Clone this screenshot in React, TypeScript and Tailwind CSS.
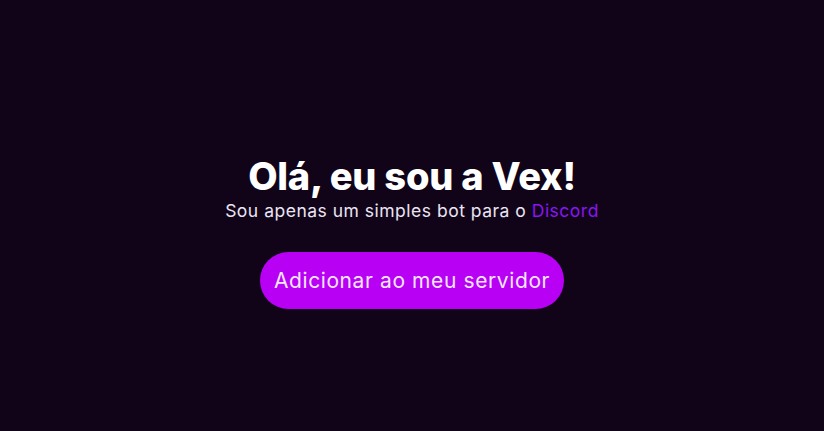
const App = () => {
  return (
    <main className="flex h-[431px] w-full flex-col items-center bg-[#110419] pt-[152px] font-['Inter',sans-serif]">
      <h1 className="text-[38px] font-extrabold leading-[48px] tracking-[-0.2px] text-white">
        Olá, eu sou a Vex!
      </h1>
      <p className="text-[17.5px] leading-[22px] tracking-[0.5px] text-[#ece4f4]">
        Sou apenas um simples bot para o{' '}
        <span className="text-[#8b14f5]">Discord</span>
      </p>
      <button className="mt-[30px] h-[57px] rounded-full bg-[#b800f5] px-[14px] text-[21px] tracking-[0.6px] text-[#f4e6fb]">
        Adicionar ao meu servidor
      </button>
    </main>
  );
};

export default App;
